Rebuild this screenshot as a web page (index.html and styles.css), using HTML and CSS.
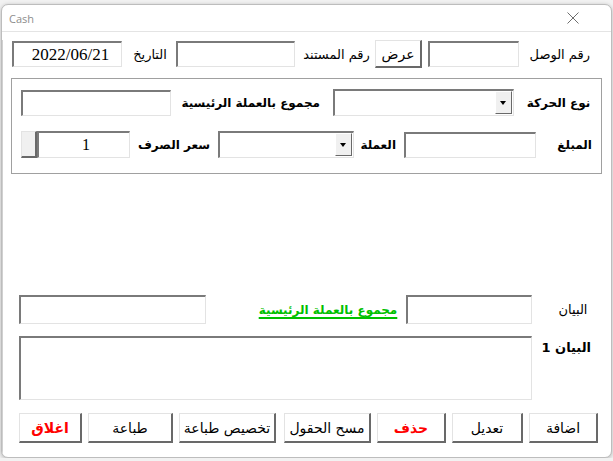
FILE: index.html
```html
<!DOCTYPE html>
<html lang="ar">
<head>
    <meta charset="UTF-8">
    <title>Cash</title>
    <link rel="stylesheet" href="styles.css">
</head>
<body>

<div class="window">
    <!-- Title bar -->
    <div class="titlebar">
        <span class="title">Cash</span>
        <svg class="close" width="12" height="12" viewBox="0 0 12 12">
            <path d="M0.5 0.5 L11.5 11.5 M11.5 0.5 L0.5 11.5" stroke="#6e6e6e" stroke-width="1" fill="none"/>
        </svg>
    </div>

    <div class="client">
        <!-- Date / document / receipt -->
        <div class="row row-top">
            <div class="field date w110">2022/06/21</div>
            <span class="label w40 ml8">التاريخ</span>
            <div class="field w119 ml6"></div>
            <span class="label w67 ml8">رقم المستند</span>
            <button class="btn btn-show w47 ml5">عرض</button>
            <div class="field w91 ml6"></div>
            <span class="label w60 ml11">رقم الوصل</span>
        </div>

        <!-- Movement frame -->
        <div class="frame">
            <div class="row row-a">
                <div class="field w150"></div>
                <span class="label bold w135 ml14">مجموع بالعملة الرئيسية</span>
                <div class="combo w181 ml13"><span class="drop"></span></div>
                <span class="label bold w67 ml11">نوع الحركة</span>
            </div>
            <div class="row row-b">
                <button class="spin"></button>
                <div class="field rate w93">1</div>
                <span class="label bold w72 ml8">سعر الصرف</span>
                <div class="combo w136 ml8"><span class="drop"></span></div>
                <span class="label bold w33 ml9">العملة</span>
                <div class="field w132 ml8"></div>
                <span class="label bold w30 ml26">المبلغ</span>
            </div>
        </div>

        <!-- Totals and notes -->
        <div class="row row-sum">
            <div class="field tall w187"></div>
            <span class="label bold link w144 ml50">مجموع بالعملة الرئيسية</span>
            <div class="field tall w126 ml6"></div>
            <span class="label w36 ml23">البيان</span>
        </div>

        <div class="row row-note">
            <div class="field memo"></div>
            <span class="label bold note-label ml13">البيان 1</span>
        </div>

        <!-- Command buttons -->
        <div class="row buttons">
            <button class="btn cmd red w63">اغلاق</button>
            <button class="btn cmd w85 ml6">طباعة</button>
            <button class="btn cmd w97 ml6">تخصيص طباعة</button>
            <button class="btn cmd w87 ml8">مسح الحقول</button>
            <button class="btn cmd red w69 ml6">حذف</button>
            <button class="btn cmd w71 ml6">تعديل</button>
            <button class="btn cmd w69 ml6">اضافة</button>
        </div>
    </div>
</div>

</body>
</html>
```

FILE: styles.css
```css
* {
    box-sizing: border-box;
}

body {
    margin: 0;
    padding: 4px 0 0 1px;
    background-color: #f2f2f2;
    font-family: "DejaVu Sans", sans-serif;
    color: #000;
}

/* Window frame */
.window {
    width: 611px;
    height: 454px;
    background-color: #fff;
    border: 1px solid #bdbdbd;
    border-radius: 7px;
    box-shadow: 0 1px 4px rgba(0,0,0,0.25);
    overflow: hidden;
}

.titlebar {
    height: 27px;
    display: flex;
    align-items: center;
    justify-content: space-between;
    padding: 0 32px 0 7px;
    border-bottom: 1px solid #e4e4e4;
}

.title {
    font-family: "Open Sans", sans-serif;
    font-size: 11px;
    color: #8c8c8c;
}

.close {
    display: block;
}

.client {
    border-left: 1px solid #d0d0d0;
    height: 100%;
}

/* Rows */
.row {
    display: flex;
    align-items: center;
}

.row-top {
    margin-top: 8px;
    padding-left: 9px;
    height: 28px;
}

.frame {
    margin: 10px 0 0 8px;
    width: 591px;
    height: 96px;
    border: 1px solid #a0a0a0;
    box-shadow: inset 1px 1px 0 #fff;
}

.row-a {
    margin-top: 10px;
    padding-left: 9px;
}

.row-b {
    margin-top: 15px;
    padding-left: 9px;
}

.row-sum {
    margin-top: 121px;
    padding-left: 16px;
}

.row-note {
    margin-top: 12px;
    padding-left: 16px;
    align-items: flex-start;
}

.buttons {
    margin-top: 13px;
    padding-left: 16px;
}

/* Labels */
.label {
    font-size: 13px;
    text-align: center;
    white-space: nowrap;
    direction: rtl;
}

.bold {
    font-size: 12px;
    font-weight: bold;
}

.link {
    color: #00c000;
    text-decoration: underline;
    text-decoration-thickness: 2px;
    text-underline-offset: 3px;
}

.note-label {
    width: 46px;
    padding-top: 4px;
    font-size: 13px;
}

/* Inputs */
.field {
    height: 26px;
    background-color: #fff;
    border-top: 2px solid #7a7a7a;
    border-left: 2px solid #7a7a7a;
    border-bottom: 1px solid #e3e3e3;
    border-right: 1px solid #e3e3e3;
    font-family: "Liberation Serif", serif;
    font-size: 16px;
    line-height: 23px;
}

.date {
    font-size: 17px;
    text-align: center;
    padding-left: 6px;
}

.rate {
    height: 27px;
    text-align: center;
    padding-left: 4px;
}

.tall {
    height: 29px;
}

.memo {
    width: 513px;
    height: 64px;
}

.combo {
    height: 27px;
    display: flex;
    justify-content: flex-end;
    background-color: #fff;
    border-top: 2px solid #7a7a7a;
    border-left: 2px solid #7a7a7a;
    border-bottom: 1px solid #e3e3e3;
    border-right: 1px solid #e3e3e3;
}

.drop {
    width: 17px;
    height: 23px;
    margin-right: 1px;
    background-color: #f0f0f0;
    border-top: 1px solid #fff;
    border-left: 1px solid #fff;
    border-bottom: 1px solid #696969;
    border-right: 1px solid #696969;
    position: relative;
}

.drop::after {
    content: "";
    position: absolute;
    left: 4px;
    top: 9px;
    border-left: 3.5px solid transparent;
    border-right: 3.5px solid transparent;
    border-top: 4px solid #000;
}

/* Buttons */
.btn {
    height: 30px;
    padding: 0;
    background-color: #fff;
    border-top: 1px solid #e3e3e3;
    border-left: 1px solid #e3e3e3;
    border-bottom: 2px solid #696969;
    border-right: 2px solid #696969;
    font-family: "DejaVu Sans", sans-serif;
    font-size: 14px;
    color: #000;
    direction: rtl;
    white-space: nowrap;
}

.btn-show {
    height: 28px;
    font-size: 14px;
}

.cmd.red {
    color: #ff0000;
    font-weight: bold;
}

.spin {
    width: 16px;
    height: 27px;
    padding: 0;
    background-color: #f0f0f0;
    border-top: 1px solid #e3e3e3;
    border-left: 1px solid #e3e3e3;
    border-bottom: 2px solid #696969;
    border-right: 2px solid #696969;
}

/* Widths and gaps */
.w30 { width: 30px; }
.w33 { width: 33px; }
.w36 { width: 36px; }
.w40 { width: 40px; }
.w47 { width: 47px; }
.w60 { width: 60px; }
.w63 { width: 63px; }
.w67 { width: 67px; }
.w69 { width: 69px; }
.w71 { width: 71px; }
.w72 { width: 72px; }
.w85 { width: 85px; }
.w87 { width: 87px; }
.w91 { width: 91px; }
.w93 { width: 93px; }
.w97 { width: 97px; }
.w110 { width: 110px; }
.w119 { width: 119px; }
.w126 { width: 126px; }
.w132 { width: 132px; }
.w135 { width: 135px; }
.w136 { width: 136px; }
.w144 { width: 144px; }
.w150 { width: 150px; }
.w181 { width: 181px; }
.w187 { width: 187px; }

.ml5 { margin-left: 5px; }
.ml6 { margin-left: 6px; }
.ml8 { margin-left: 8px; }
.ml9 { margin-left: 9px; }
.ml11 { margin-left: 11px; }
.ml13 { margin-left: 13px; }
.ml14 { margin-left: 14px; }
.ml23 { margin-left: 23px; }
.ml26 { margin-left: 26px; }
.ml50 { margin-left: 50px; }
```
